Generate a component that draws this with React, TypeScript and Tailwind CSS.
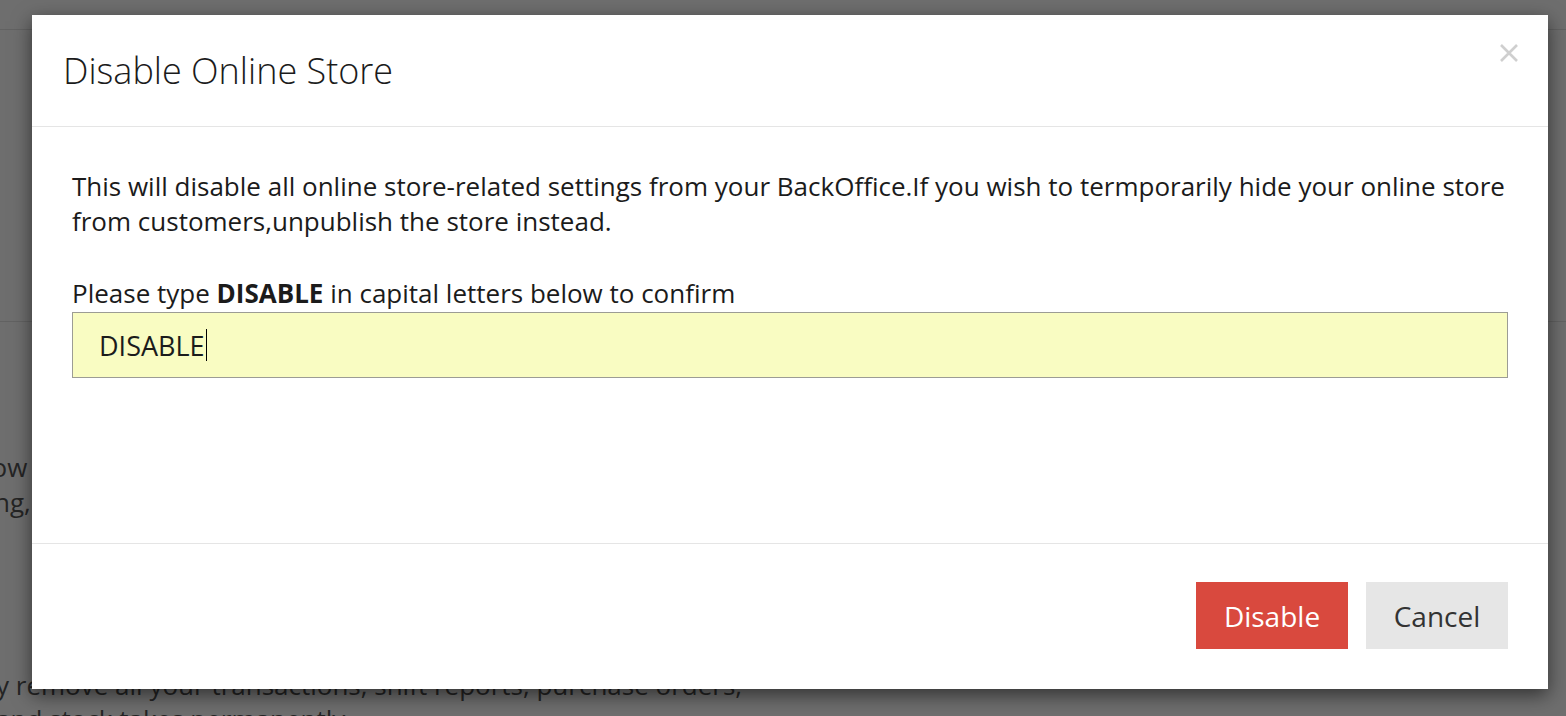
export default function App() {
  return (
    <div className="relative w-full h-[716px] overflow-hidden bg-white font-['Open_Sans',sans-serif]">
      {/* page behind the dialog */}
      <div className="flex flex-col text-[26px] text-[#555]">
        <div className="h-[30px] border-b border-[#e3e3e3]" />
        <div className="h-[292px] border-b border-[#e3e3e3]" />
        <div className="pt-[58px] leading-[35px] -ml-[6px]">
          <p>.</p>
          <p className="mt-[35px] -ml-[30px]">allow</p>
          <p>ng,</p>
        </div>
        <div className="mt-[148px] leading-[34px] -ml-[4px] whitespace-nowrap">
          <p>y remove all your transactions, shift reports, purchase orders,</p>
          <p>and stock takes permanently.</p>
        </div>
      </div>

      {/* backdrop */}
      <div className="absolute inset-0 bg-black/[0.57]" />

      {/* dialog */}
      <div className="absolute left-[32px] top-[15px] w-[1516px] bg-white shadow-[0_6px_18px_rgba(0,0,0,0.55)] text-[#1b1b1b]">
        <div className="relative border-b border-[#e5e5e5] px-[31px] py-[34px]">
          <h3 className="text-[36px] font-light leading-[43px]">Disable Online Store</h3>
          <button className="absolute right-[29px] top-[28px] text-[#cfcfcf]">
            <svg width="20" height="20" viewBox="0 0 20 20" fill="none" stroke="currentColor" strokeWidth="2.6">
              <path d="M2 2L18 18M18 2L2 18" />
            </svg>
          </button>
        </div>

        <div className="h-[416px] px-[40px] pt-[42px] text-[26px] leading-[35px]">
          <p>
            This will disable all online store-related settings from your BackOffice.If you wish to termporarily hide
            your online store from customers,unpublish the store instead.
          </p>
          <p className="mt-[37px]">
            Please type <b className="font-bold">DISABLE</b> in capital letters below to confirm
          </p>
          <div className="mt-px flex h-[66px] items-center border border-[#9c9c94] bg-[#f9fcc2] pl-[26px]">
            <span className="text-[27px]">DISABLE</span>
            <span className="ml-px h-[32px] w-px bg-black" />
          </div>
        </div>

        <div className="flex justify-end gap-[18px] border-t border-[#e5e5e5] px-[40px] pt-[38px] pb-[40px]">
          <button className="h-[67px] w-[152px] bg-[#d9493e] text-[28px] text-white">Disable</button>
          <button className="h-[67px] w-[142px] bg-[#e6e6e6] text-[28px] text-[#333]">Cancel</button>
        </div>
      </div>
    </div>
  );
}
